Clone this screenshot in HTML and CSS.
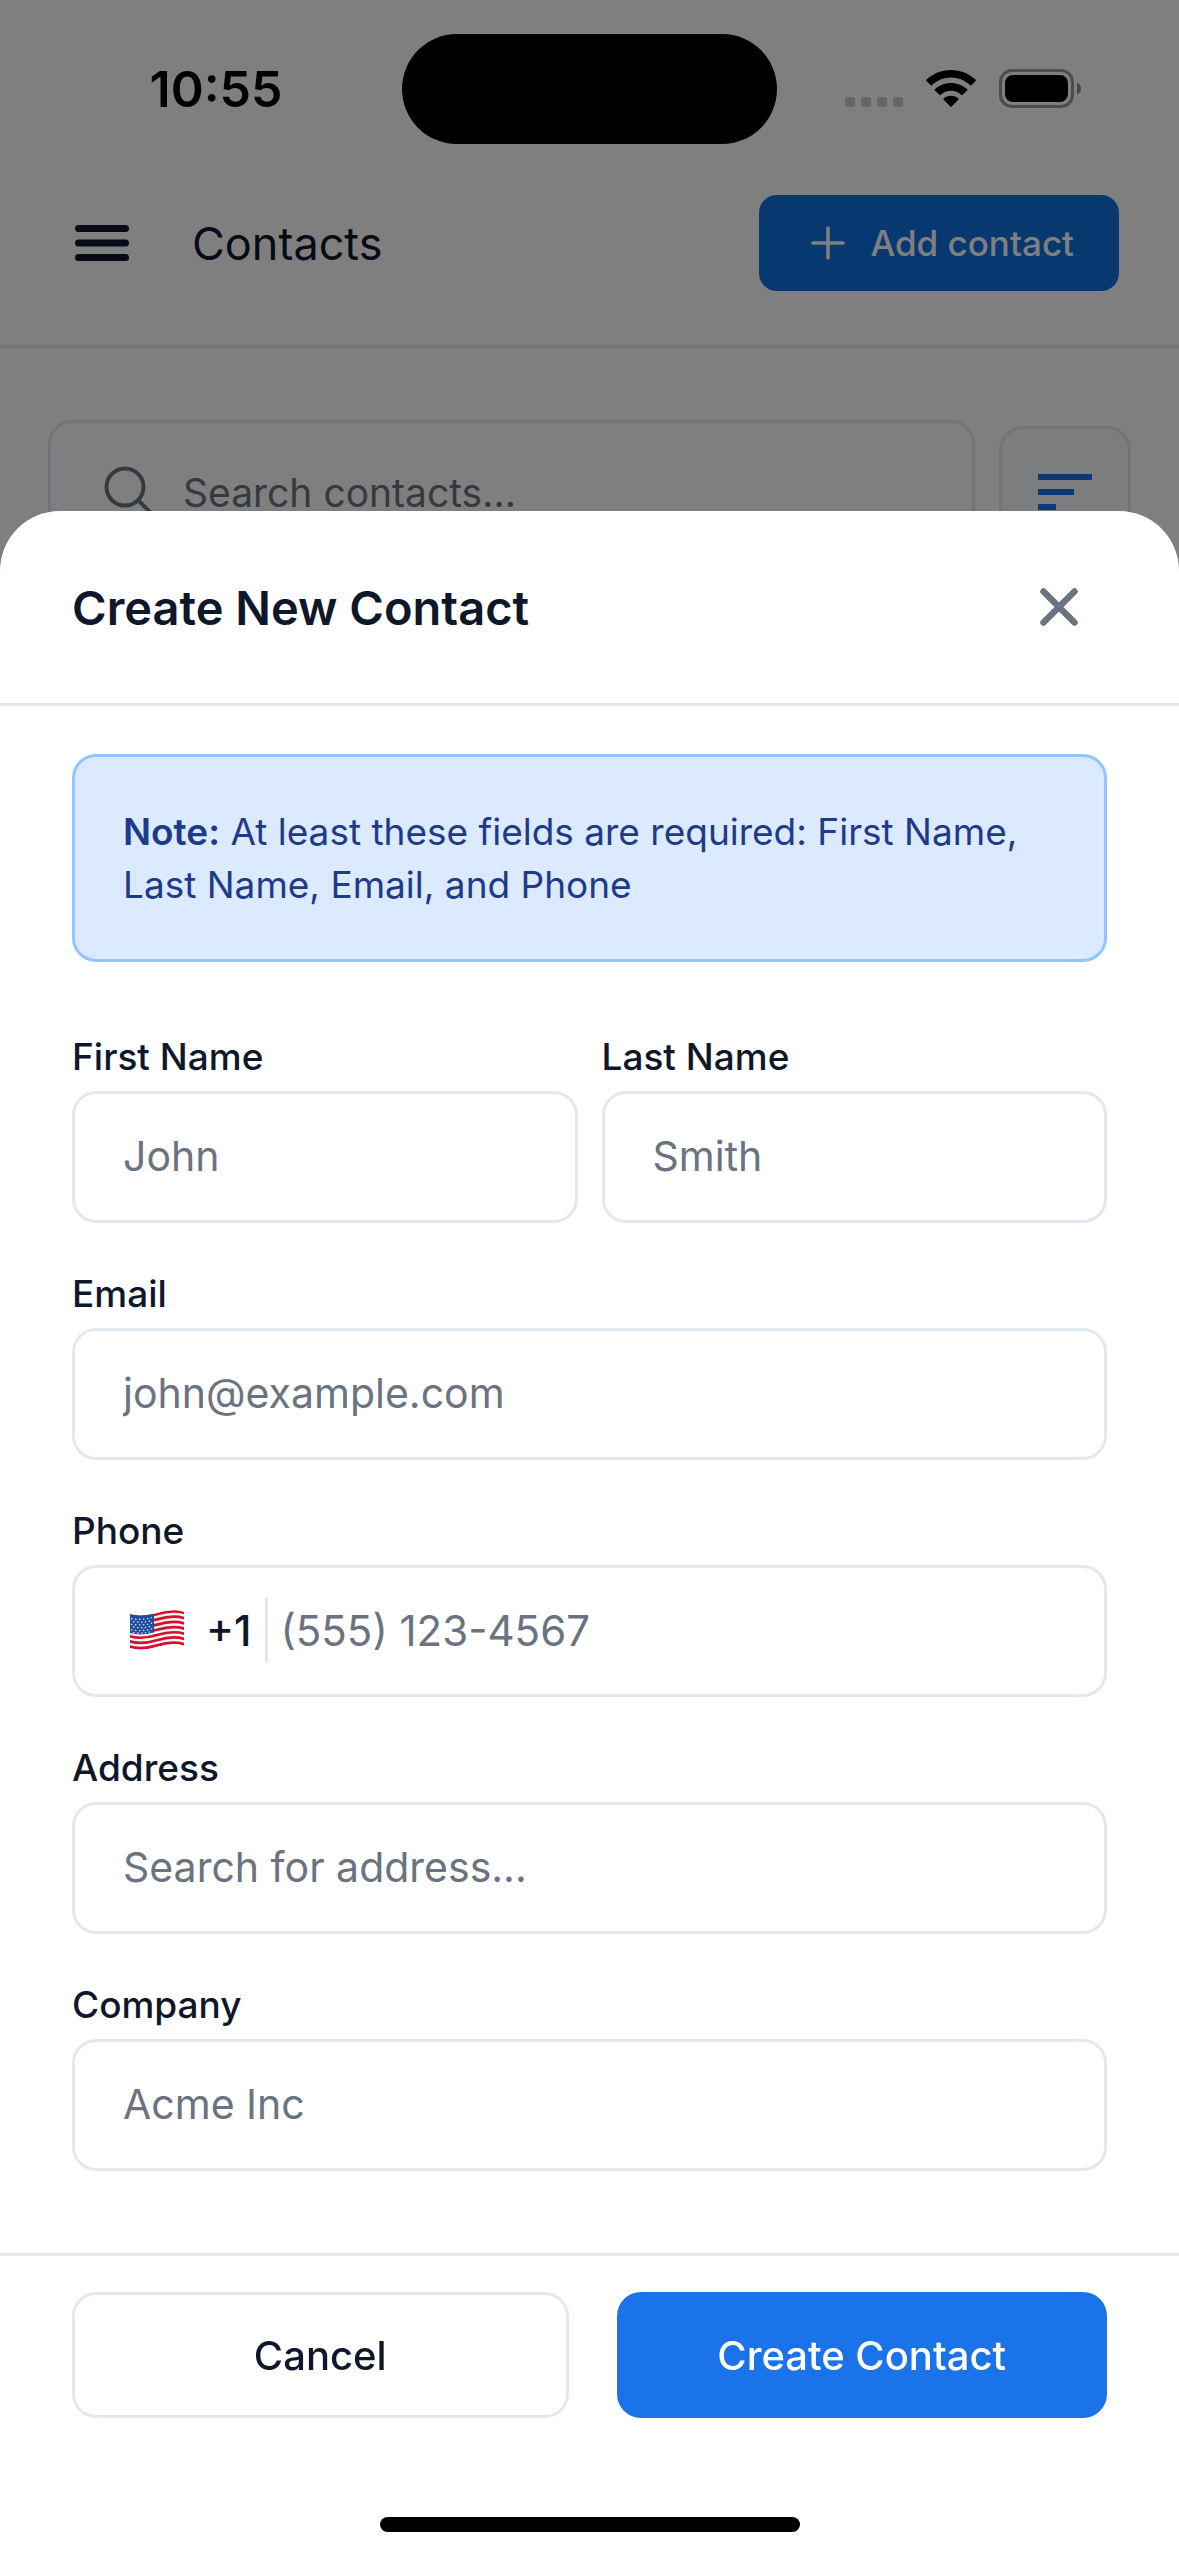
FILE: index.html
```html
<!DOCTYPE html>
<html lang="en">
<head>
<meta charset="utf-8">
<meta name="viewport" content="width=device-width, initial-scale=1">
<title>Contacts</title>
<link rel="stylesheet" href="styles.css">
</head>
<body>
<div class="page">
  <div class="status">
    <span class="status-time">10:55</span>
    <span class="island"></span>
    <span class="status-icons">
      <svg class="icon-signal" viewBox="0 0 58 38" aria-hidden="true">
        <g fill="#000" fill-opacity=".2"><rect x="0" y="27" width="10" height="10" rx="3.500"/><rect x="16" y="27" width="10" height="10" rx="3.500"/><rect x="32" y="27" width="10" height="10" rx="3.500"/><rect x="48" y="27" width="10" height="10" rx="3.500"/></g>
      </svg>
      <svg class="icon-wifi" viewBox="0 0 50 38" aria-hidden="true">
        <path d="M25 0C15.500 0 7 3.700 .3 9.700a.8.8 0 0 0 0 1.100l4.400 4.500a.8.8 0 0 0 1.100 0C10.900 10.500 17.600 7.600 25 7.600s14.100 2.900 19.200 7.700a.8.8 0 0 0 1.100 0l4.400-4.500a.8.8 0 0 0 0-1.100C43 3.700 34.500 0 25 0z"/>
        <path d="M25 13c-6.200 0-11.900 2.400-16.100 6.200a.8.800 0 0 0 0 1.200l4.500 4.400a.8.800 0 0 0 1.100.1c2.800-2.500 6.500-4.100 10.500-4.100s7.700 1.600 10.500 4.100a.8.800 0 0 0 1.100-.1l4.500-4.400a.8.800 0 0 0 0-1.200C36.900 15.400 31.200 13 25 13z"/>
        <path d="M25 25.800c-2.800 0-5.400 1-7.300 2.700a.8.800 0 0 0 0 1.200l6.700 6.900a.8.800 0 0 0 1.200 0l6.700-6.900a.8.800 0 0 0 0-1.200c-1.900-1.700-4.500-2.700-7.300-2.700z"/>
      </svg>
      <svg class="icon-battery" viewBox="0 0 82 39" aria-hidden="true">
        <rect x="1.500" y="1.500" width="72" height="36" rx="11.500" fill="none" stroke="#000" stroke-opacity=".4" stroke-width="3"/>
        <rect x="6" y="6" width="63" height="27" rx="8"/>
        <path d="M78 13.500c2.400 1 4 3.300 4 6s-1.600 5-4 6z" fill-opacity=".45"/>
      </svg>
    </span>
  </div>
  <header class="topbar">
    <button class="icon-button" type="button" aria-label="Open menu">
      <svg class="icon-menu" viewBox="0 0 54 36" aria-hidden="true"><path d="M3.500 3.500h47M3.500 18h47M3.500 32.500h47" fill="none" stroke="#0f172a" stroke-width="7" stroke-linecap="round"/></svg>
    </button>
    <h1 class="topbar-title">Contacts</h1>
    <button class="add-button" type="button">
      <svg class="icon-plus" viewBox="0 0 34 34" aria-hidden="true"><path d="M17 2v30M2 17h30" fill="none" stroke="#fff" stroke-width="3.500" stroke-linecap="round"/></svg>
      Add contact
    </button>
  </header>
  <div class="search-row">
    <label class="search">
      <svg class="icon-search" viewBox="0 0 54 54" aria-hidden="true"><g fill="none" stroke="#6b7280" stroke-width="4" stroke-linecap="round"><circle cx="22" cy="22" r="18.500"/><path d="M35.500 35.500 50 50"/></g></svg>
      <input class="search-input" type="search" placeholder="Search contacts..." aria-label="Search contacts">
    </label>
    <button class="sort-button" type="button" aria-label="Sort">
      <svg class="icon-sort" viewBox="0 0 54 36" aria-hidden="true"><path d="M0 0h54v6H0zM0 15h36v6H0zM0 30h18v6H0z" fill="#1a73e8"/></svg>
    </button>
  </div>
</div>

<div class="scrim"></div>

<form class="sheet" role="dialog" aria-labelledby="sheet-title">
  <div class="sheet-header">
    <h2 class="sheet-title" id="sheet-title">Create New Contact</h2>
    <button class="icon-button" type="button" aria-label="Close">
      <svg class="icon-close" viewBox="0 0 38 38" aria-hidden="true"><path d="m3.500 3.500 31 31m0-31-31 31" fill="none" stroke="#6b7280" stroke-width="6.500" stroke-linecap="round"/></svg>
    </button>
  </div>
  <div class="sheet-body">
    <p class="note"><strong>Note:</strong> At least these fields are required: First Name, Last Name, Email, and Phone</p>
    <div class="fields">
      <div class="field-pair">
        <div class="field">
          <label class="label" for="first">First Name</label>
          <input class="box" id="first" type="text" placeholder="John">
        </div>
        <div class="field">
          <label class="label" for="last">Last Name</label>
          <input class="box" id="last" type="text" placeholder="Smith">
        </div>
      </div>
      <div class="field">
        <label class="label" for="email">Email</label>
        <input class="box" id="email" type="email" placeholder="john@example.com">
      </div>
      <div class="field">
        <label class="label" for="phone">Phone</label>
        <div class="box phone">
          <button class="country" type="button">
            <svg class="icon-flag" viewBox="0 0 56 40" aria-hidden="true">
              <defs><clipPath id="wave"><path d="M1 4C9 6.500 18 5.500 28 3S47-1 55 2V36c-8-3-17-2-27 1S9 41 1 38z"/></clipPath></defs>
              <g clip-path="url(#wave)">
                <path fill="#f4f4f6" d="M0-4h56v48H0z"/>
                <g fill="none" stroke="#d5102b" stroke-width="2.700">
                  <path d="M0 5.200c9 3 18 2 28-1s19-4 28-1"/><path d="M0 10.400c9 3 18 2 28-1s19-4 28-1"/><path d="M0 15.600c9 3 18 2 28-1s19-4 28-1"/><path d="M0 20.800c9 3 18 2 28-1s19-4 28-1"/><path d="M0 26c9 3 18 2 28-1s19-4 28-1"/><path d="M0 31.200c9 3 18 2 28-1s19-4 28-1"/><path d="M0 36.400c9 3 18 2 28-1s19-4 28-1"/>
                </g>
                <path fill="#1f4e9e" d="M0 0h25v22.500C16 25 8 25 0 22.800z"/>
                <g fill="none" stroke="#dfe8f5" stroke-width="1.300" stroke-dasharray="1.400 2.600">
                  <path d="M2 8.500c7 1.500 14 1 21-1"/><path d="M4 11.300c7 1.500 12 1 19-1"/><path d="M2 14.100c7 1.500 14 1 21-1"/><path d="M4 16.900c7 1.500 12 1 19-1"/><path d="M2 19.700c7 1.500 14 1 21-1"/><path d="M4 22.300c7 1.500 12 1 19-1"/>
                </g>
              </g>
            </svg>
            +1
          </button>
          <input class="phone-input" id="phone" type="tel" placeholder="(555) 123-4567">
        </div>
      </div>
      <div class="field">
        <label class="label" for="address">Address</label>
        <input class="box" id="address" type="text" placeholder="Search for address...">
      </div>
      <div class="field">
        <label class="label" for="company">Company</label>
        <input class="box" id="company" type="text" placeholder="Acme Inc">
      </div>
    </div>
  </div>
  <div class="sheet-footer">
    <button class="action action-cancel" type="button">Cancel</button>
    <button class="action action-create" type="submit">Create Contact</button>
  </div>
  <span class="home-indicator"></span>
</form>
</body>
</html>
```
FILE: styles.css
```css
* { box-sizing: border-box; }

html, body { height: 100%; }

body {
  margin: 0;
  overflow: hidden;
  background: #fff;
  color: #0f172a;
  font-family: Inter, "Liberation Sans", sans-serif;
  font-size: 41px;
}

button, input {
  margin: 0;
  padding: 0;
  border: 0;
  background: none;
  color: inherit;
  font: inherit;
}

input { min-width: 0; outline: 0; }
input::placeholder { color: #6b7280; opacity: 1; }
button { cursor: pointer; }
svg { display: block; flex: none; }
h1, h2, p { margin: 0; }

/* Status bar */
.status {
  display: grid;
  grid-template-columns: 1fr 375px 1fr;
  align-items: center;
  justify-items: center;
  height: 177px;
}
.status-time { padding-left: 30px; color: #000; font-size: 50px; font-weight: 600; }
.island { width: 100%; height: 110px; border-radius: 55px; background: #000; }
.status-icons { display: flex; align-items: center; gap: 23px; padding-right: 30px; }
.icon-signal { width: 58px; height: 38px; }
.icon-wifi { width: 50px; height: 38px; }
.icon-battery { width: 82px; height: 39px; }

/* Top bar */
.topbar {
  display: flex;
  align-items: center;
  padding: 18px 60px 54px 75px;
  border-bottom: 3px solid #e2e8f0;
}
.icon-menu { width: 54px; height: 36px; }
.topbar-title { flex: 1; padding-left: 63px; font-size: 45px; font-weight: 400; }
.add-button {
  display: flex;
  align-items: center;
  gap: 25px;
  height: 96px;
  padding: 0 45px 0 52px;
  border-radius: 18px;
  background: #1070e0;
  color: #fff;
  font-size: 35px;
  font-weight: 500;
}
.icon-plus { width: 34px; height: 34px; }

/* Search */
.search-row { display: flex; align-items: center; gap: 24px; padding: 72px 48px; }
.search {
  display: flex;
  flex: 1;
  align-items: center;
  gap: 26px;
  height: 144px;
  padding: 0 52px;
  border: 3px solid #e2e8f0;
  border-radius: 24px;
}
.icon-search { width: 54px; height: 54px; }
.search-input { flex: 1; appearance: none; font-size: 39px; }
.sort-button {
  display: grid;
  place-items: center;
  width: 132px;
  height: 132px;
  border: 3px solid #e2e8f0;
  border-radius: 24px;
  background: #f8fafc;
}
.icon-sort { width: 54px; height: 36px; }

/* Sheet */
.scrim { position: fixed; inset: 0; background: rgba(0, 0, 0, .5); }
.sheet {
  position: fixed;
  right: 0;
  bottom: 0;
  left: 0;
  display: flex;
  flex-direction: column;
  height: 80%;
  border-radius: 60px 60px 0 0;
  background: #fff;
}
.sheet-header {
  display: flex;
  align-items: center;
  justify-content: space-between;
  height: 195px;
  padding: 0 101px 0 72px;
  border-bottom: 3px solid #e2e8f0;
}
.sheet-title { font-size: 47px; font-weight: 600; }
.icon-close { width: 38px; height: 38px; }
.sheet-body { flex: 1; min-height: 0; padding: 48px 72px; overflow: hidden; }
.note {
  padding: 48px;
  border: 3px solid #93c5fd;
  border-radius: 24px;
  background: #dbeafe;
  color: #1e3a8a;
  font-size: 37px;
  line-height: 53px;
}
.note strong { font-weight: 600; }
.fields { display: flex; flex-direction: column; gap: 48px; padding-top: 72px; }
.field-pair { display: grid; grid-template-columns: 1fr 1fr; gap: 24px; }
.field { display: flex; flex-direction: column; gap: 11px; }
.label { font-size: 37px; font-weight: 500; line-height: 46px; }
.box {
  width: 100%;
  height: 132px;
  padding: 0 48px 2px;
  border: 3px solid #e2e8f0;
  border-radius: 24px;
}
.phone { display: flex; align-items: center; }
.country {
  display: flex;
  align-items: center;
  gap: 21px;
  height: 64px;
  padding: 0 14px 0 6px;
  border-right: 3px solid #e2e8f0;
  font-size: 42px;
  font-weight: 500;
}
.icon-flag { width: 56px; height: 40px; }
.phone-input { flex: 1; padding-left: 12px; font-size: 42px; }

/* Actions */
.sheet-footer {
  display: flex;
  gap: 48px;
  padding: 36px 72px 138px;
  border-top: 3px solid #e2e8f0;
}
.action {
  flex: 1 1 0;
  height: 126px;
  border-radius: 24px;
  font-size: 40px;
  font-weight: 500;
}
.action-cancel { border: 3px solid #e2e8f0; }
.action-create { background: #1a73e8; color: #fff; }
.home-indicator {
  position: absolute;
  bottom: 24px;
  left: 50%;
  width: 420px;
  height: 15px;
  margin-left: -210px;
  border-radius: 8px;
  background: #000;
}
```
